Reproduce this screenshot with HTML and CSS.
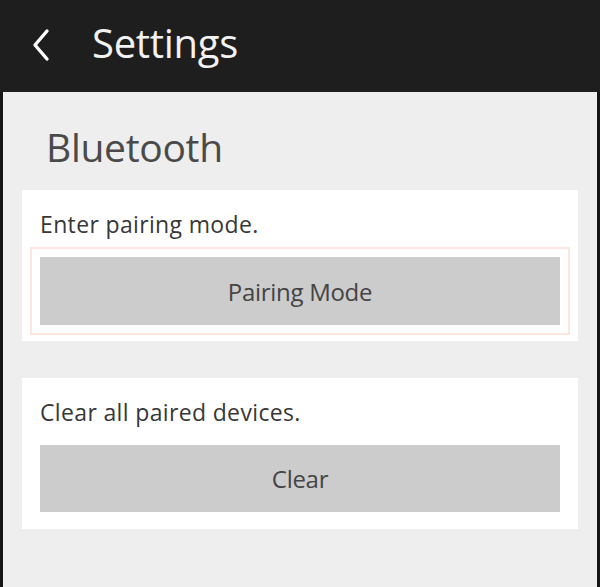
FILE: index.html
```html
<!DOCTYPE html>
<html>
<head>
<meta charset="utf-8">
<link rel="stylesheet" href="styles.css">
</head>
<body>
<div class="screen">
  <header class="topbar">
    <svg class="back" width="22" height="34" viewBox="0 0 22 34"><path d="M17 3 L5 17 L17 31" fill="none" stroke="#fff" stroke-width="3.4" stroke-linecap="round" stroke-linejoin="round"/></svg>
    <h1 class="title">Settings</h1>
  </header>
  <main class="content">
    <h2 class="section">Bluetooth</h2>
    <div class="card">
      <p class="label">Enter pairing mode.</p>
      <button class="btn focused">Pairing Mode</button>
    </div>
    <div class="card second">
      <p class="label">Clear all paired devices.</p>
      <button class="btn">Clear</button>
    </div>
  </main>
</div>
</body>
</html>
```
FILE: styles.css
```css
html, body { margin: 0; padding: 0; }
body { font-family: "Open Sans", "Noto Sans", sans-serif; background: #eeeeee; }
.screen {
  width: 600px; height: 587px; box-sizing: border-box;
  border-left: 3px solid #151515; border-right: 3px solid #151515;
  background: #eeeeee; display: flex; flex-direction: column;
}
.topbar {
  height: 92px; background: #1e1e1e; display: flex; align-items: center;
  margin: 0 -3px; padding-left: 30px; box-sizing: border-box;
}
.back { display: block; margin-top: -2px; }
.title {
  margin: -6px 0 0 40px; font-weight: 400; font-size: 40px; color: #f2f2f2;
  letter-spacing: -0.3px; line-height: 1;
}
.content { padding: 0 19px; display: flex; flex-direction: column; }
.section {
  margin: 0; font-weight: 400; font-size: 39px; color: #4a4a4a;
  height: 98px; box-sizing: border-box; padding: 33px 0 0 24px; line-height: 44px;
  letter-spacing: -0.3px;
}
.card {
  background: #ffffff; padding: 20px 18px 16px; display: flex; flex-direction: column;
}
.card.second { margin-top: 37px; padding-bottom: 17px; }
.label { margin: 0; font-size: 23px; line-height: 28px; color: #383838; letter-spacing: 0.35px; }
.btn {
  margin-top: 19px; height: 68px; border: none; background: #cccccc;
  font-family: inherit; font-size: 24px; color: #444; letter-spacing: -0.3px; padding: 0;
}
.second .btn { height: 67px; }
.btn.focused { outline: 2px solid #fde6df; outline-offset: 8px; }
```
